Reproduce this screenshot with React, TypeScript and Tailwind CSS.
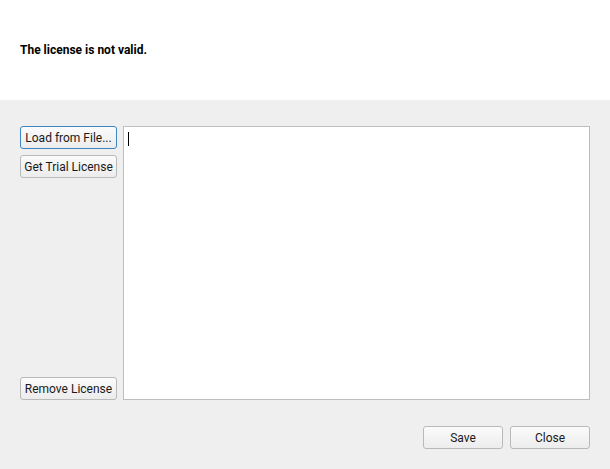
import React from "react";

function Btn({ children, focused, className = "" }: { children: React.ReactNode; focused?: boolean; className?: string }) {
  return (
    <button
      className={`h-[23px] rounded-[3px] border bg-gradient-to-b from-[#fbfbfb] to-[#ececec] text-[12px] leading-none text-[#1a1a1a] ${
        focused ? "border-[#3d86c3]" : "border-[#b9b9b9]"
      } ${className}`}
    >
      {children}
    </button>
  );
}

export default function App() {
  return (
    <div className="flex h-[469px] w-[610px] flex-col font-['Roboto',sans-serif]">
      {/* Message header */}
      <div className="flex h-[100px] items-center bg-white px-5">
        <p className="pb-[1px] text-[12px] font-bold text-black">The license is not valid.</p>
      </div>

      {/* Body */}
      <div className="flex flex-1 flex-col bg-[#efefef] px-5 pt-[26px] pb-5">
        <div className="flex h-[274px] gap-[6px]">
          <div className="flex w-[97px] flex-col">
            <Btn focused className="w-full">Load from File...</Btn>
            <Btn className="mt-[6px] w-full">Get Trial License</Btn>
            <div className="flex-1" />
            <Btn className="w-full">Remove License</Btn>
          </div>
          <div className="flex-1 border border-[#bdbdbd] bg-white px-[4px] py-[4px]">
            <span className="ml-[0px] mt-[1px] block h-[14px] w-[1px] bg-black" />
          </div>
        </div>
        <div className="mt-auto flex justify-end gap-[7px]">
          <Btn className="w-[80px]">Save</Btn>
          <Btn className="w-[80px]">Close</Btn>
        </div>
      </div>
    </div>
  );
}
